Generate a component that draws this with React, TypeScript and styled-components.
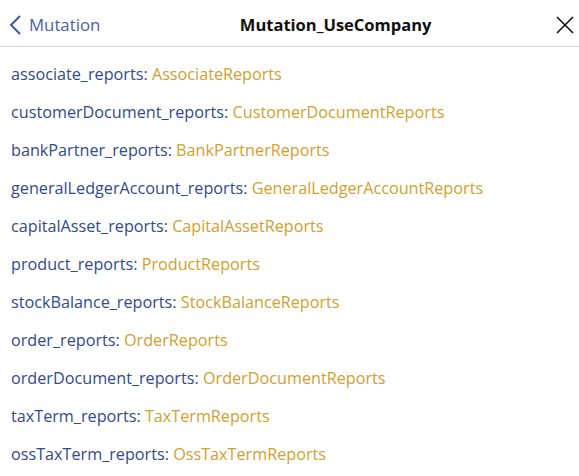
import styled, { createGlobalStyle } from "styled-components";

const ROWS: [string, string][] = [
  ["associate_reports", "AssociateReports"],
  ["customerDocument_reports", "CustomerDocumentReports"],
  ["bankPartner_reports", "BankPartnerReports"],
  ["generalLedgerAccount_reports", "GeneralLedgerAccountReports"],
  ["capitalAsset_reports", "CapitalAssetReports"],
  ["product_reports", "ProductReports"],
  ["stockBalance_reports", "StockBalanceReports"],
  ["order_reports", "OrderReports"],
  ["orderDocument_reports", "OrderDocumentReports"],
  ["taxTerm_reports", "TaxTermReports"],
  ["ossTaxTerm_reports", "OssTaxTermReports"],
];

export default function App() {
  return (
    <>
      <GlobalStyle />
      <Panel>
        <Header>
          <BackButton>
            <svg width="14" height="22" viewBox="0 0 14 22">
              <path
                d="M12 2 L3 11 L12 20"
                fill="none"
                stroke="#3b5aa3"
                strokeWidth="2"
              />
            </svg>
            <span>Mutation</span>
          </BackButton>
          <Title>Mutation_UseCompany</Title>
          <CloseButton>
            <svg width="18" height="18" viewBox="0 0 18 18">
              <path
                d="M1 1 L17 17 M17 1 L1 17"
                stroke="#111"
                strokeWidth="1.6"
              />
            </svg>
          </CloseButton>
        </Header>
        <List>
          {ROWS.map(([field, type]) => (
            <Row key={field}>
              <Field>{field}:</Field> <TypeName>{type}</TypeName>
            </Row>
          ))}
        </List>
      </Panel>
    </>
  );
}

const GlobalStyle = createGlobalStyle`
  * {
    box-sizing: border-box;
  }
  body {
    margin: 0;
    background: #fff;
    font-family: "Open Sans", "Noto Sans", sans-serif;
  }
`;

const Panel = styled.div`
  display: flex;
  flex-direction: column;
  width: 579px;
  height: 476px;
  overflow: hidden;
`;

const Header = styled.header`
  display: flex;
  align-items: center;
  height: 52px;
  padding: 3px 3px 0 8px;
  border-bottom: 1px solid #d6d6d6;
`;

const BackButton = styled.div`
  display: flex;
  align-items: center;
  gap: 7px;
  color: #4a5ea8;
  font-size: 16.8px;
`;

const Title = styled.div`
  flex: 1;
  padding-left: 15px;
  text-align: center;
  font-size: 16.5px;
  font-weight: 700;
  color: #111;
`;

const CloseButton = styled.div`
  display: flex;
  align-items: center;
  width: 20px;
`;

const List = styled.div`
  display: flex;
  flex-direction: column;
  padding: 11px 11px 0;
`;

const Row = styled.div`
  height: 38px;
  line-height: 33px;
  font-size: 16.2px;
  white-space: nowrap;
`;

const Field = styled.span`
  color: #2f4a8e;
`;

const TypeName = styled.span`
  color: #d1a02e;
`;
